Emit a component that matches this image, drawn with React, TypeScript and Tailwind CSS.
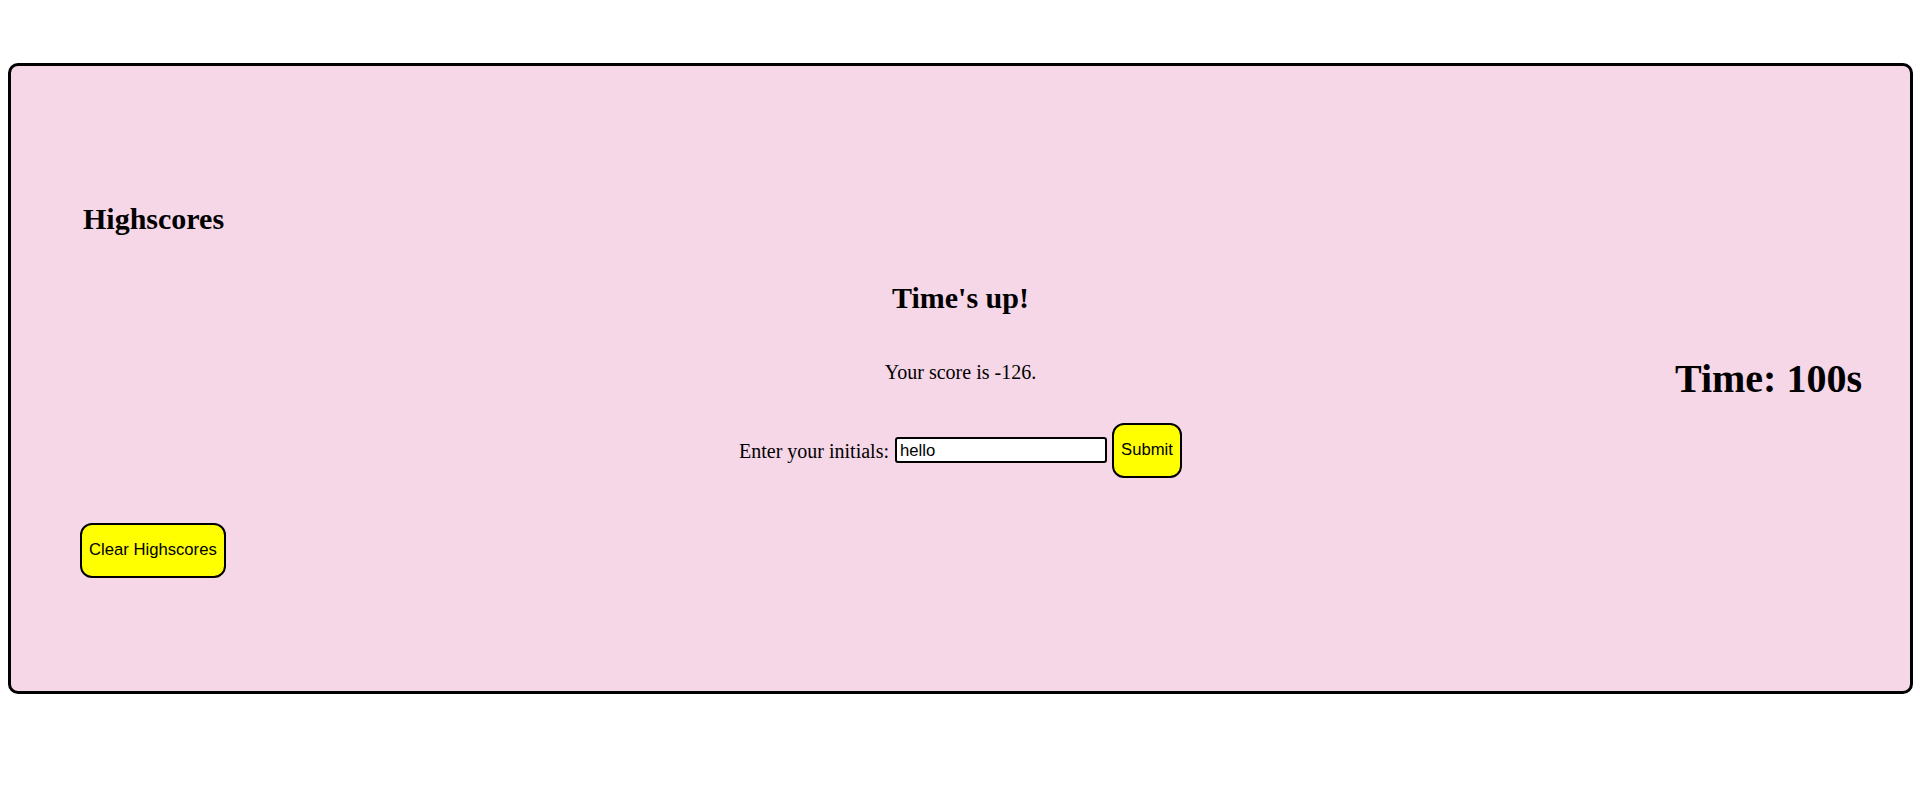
import { useState } from 'react';

const serif = { fontFamily: '"Liberation Serif", "Times New Roman", serif' };
const sans = { fontFamily: '"Liberation Sans", Arial, sans-serif' };

export default function App() {
  const [initials, setInitials] = useState('hello');

  return (
    <div className="w-[1920px] h-[804px] bg-white overflow-hidden" style={serif}>
      <div className="ml-[8px] mt-[63px] w-[1905px] h-[631px] pb-[2px] border-[3px] border-black rounded-[10px] bg-[#f6d7e7] grid grid-cols-[1fr_auto_1fr] items-center text-black">
        {/* Highscores column */}
        <div className="pl-[69px] flex flex-col items-start pt-[26px]">
          <h2 className="ml-[3px] text-[30px] font-bold leading-none">Highscores</h2>
          <button
            className="mt-[289px] h-[55px] px-[7px] bg-[#ffff00] border-[2.5px] border-black rounded-[12px] text-[16.67px] leading-none"
            style={sans}
          >
            Clear Highscores
          </button>
        </div>

        {/* Quiz result */}
        <div className="flex flex-col items-center pt-[5.5px]">
          <h2 className="text-[30px] font-bold leading-none">Time's up!</h2>
          <p className="mt-[48.5px] text-[20px] leading-none">Your score is -126.</p>
          <div className="mt-[41px] flex items-center">
            <label className="text-[20px] leading-none mt-[1px]">Enter your initials:</label>
            <input
              value={initials}
              onChange={e => setInitials(e.target.value)}
              className="ml-[6px] w-[212px] h-[26px] border-2 border-black rounded-[3px] bg-white px-[3px] pt-[1px] text-[16.67px] leading-none outline-none"
              style={sans}
            />
            <button
              className="ml-[5px] w-[70px] h-[55px] pt-[1px] bg-[#ffff00] border-[2.5px] border-black rounded-[12px] text-[16.67px] leading-none"
              style={sans}
            >
              Submit
            </button>
          </div>
        </div>

        {/* Timer */}
        <div className="flex justify-end pr-[48px] pt-[2px]">
          <h1 className="text-[40px] font-bold leading-none">Time: 100s</h1>
        </div>
      </div>
    </div>
  );
}
